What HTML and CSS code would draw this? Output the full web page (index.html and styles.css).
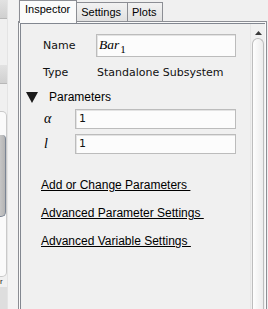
FILE: index.html
```html
<!DOCTYPE html>
<html>
<head>
<meta charset="utf-8">
<link rel="stylesheet" href="styles.css">
</head>
<body>
<div class="app">
  <div class="side">
    <div class="side-col">
      <div class="side-btn"></div>
      <div class="side-btn second"></div>
      <div class="side-track"><div class="side-thumb"></div></div>
      <div class="side-r">r</div>
      <div class="side-foot"></div>
    </div>
  </div>
  <div class="main">
    <div class="tabs">
      <div class="tab active">Inspector</div>
      <div class="tab">Settings</div>
      <div class="tab">Plots</div>
    </div>
    <div class="pane">
      <div class="scroll">
        <div class="content">
          <div class="field-row name-row">
            <span class="lbl">Name</span>
            <div class="input name-input"><span class="math">Bar</span><span class="sub">1</span></div>
          </div>
          <div class="field-row type-row">
            <span class="lbl">Type</span>
            <span class="val">Standalone Subsystem</span>
          </div>
          <div class="section">
            <svg class="tri" width="12" height="11" viewBox="0 0 12 11"><polygon points="0,0 12,0 6,11" fill="#1a1a1a"/></svg>
            <span class="sec-title">Parameters</span>
          </div>
          <div class="param-row first">
            <span class="sym">α</span>
            <div class="input pinput">1</div>
          </div>
          <div class="param-row">
            <span class="sym">l</span>
            <div class="input pinput">1</div>
          </div>
          <div class="links">
            <a class="link">Add or Change Parameters&nbsp;</a>
            <a class="link">Advanced Parameter Settings&nbsp;</a>
            <a class="link">Advanced Variable Settings&nbsp;</a>
          </div>
        </div>
        <div class="vscroll">
          <svg class="arrow" width="7" height="4" viewBox="0 0 7 4"><polygon points="0,4 7,4 3.5,0" fill="#3a3a3a"/></svg>
          <div class="vthumb"></div>
        </div>
      </div>
    </div>
  </div>
</div>
</body>
</html>
```

FILE: styles.css
```css
* { box-sizing: border-box; }
html, body {
  margin: 0;
  padding: 0;
  width: 268px;
  height: 309px;
  overflow: hidden;
  background: #f0f0f0;
  font-family: "DejaVu Sans", sans-serif;
  font-size: 11px;
  color: #111;
}
.app {
  display: flex;
  height: 309px;
}
.side {
  width: 18px;
  flex: none;
  background: #f3f3f3;
}
.side-col {
  width: 8px;
  height: 309px;
  display: flex;
  flex-direction: column;
  background: #f0f0f0;
  border-right: 1px solid #e4e4e4;
  overflow: hidden;
}
.side-btn {
  height: 19px;
  flex: none;
  background: linear-gradient(#e2e2e2, #d0d0d0);
  border-bottom: 1px solid #b8b8b8;
}
.side-btn.second {
  margin-top: 46px;
}
.side-track {
  margin-top: 27px;
  height: 166px;
  flex: none;
  width: 7px;
  background: #fafafa;
  border: 1px solid #c9c9c9;
  border-left: none;
  border-radius: 0 5px 5px 0;
  padding-top: 23px;
}
.side-thumb {
  height: 82px;
  width: 6px;
  background: linear-gradient(to right, #c6c6c6, #b4b4b4);
  border-right: 1px solid #7b8594;
  border-bottom: 1px solid #7b8594;
  border-radius: 0 4px 5px 0;
}
.side-r {
  height: 9px;
  flex: none;
  font-family: "Liberation Sans", sans-serif;
  font-size: 8px;
  line-height: 9px;
  color: #222;
}
.side-foot {
  margin-top: 1px;
  flex: 1;
  background: #dedede;
}
.main {
  flex: 1;
  margin-right: 1px;
  display: flex;
  flex-direction: column;
  min-width: 0;
}
.tabs {
  display: flex;
  align-items: flex-end;
  height: 21px;
  padding-left: 1px;
  flex: none;
}
.tab {
  height: 19px;
  padding: 3px 6px 0 4px;
  margin-right: -1px;
  border: 1px solid #8c8e94;
  border-bottom: none;
  background: linear-gradient(#f2f2f2, #e1e1e1);
  font-family: "Liberation Sans", sans-serif;
  font-size: 11px;
  line-height: 13px;
  color: #000;
  white-space: nowrap;
}
.tab.active {
  position: relative;
  z-index: 1;
  height: 23px;
  margin-bottom: -2px;
  padding: 2px 6px 0 5px;
  background: #fbfbfb;
}
.pane {
  flex: 1;
  border: 1px solid #8c8e94;
  border-bottom: none;
  padding: 1px 1px 0 1px;
  background: #fafafa;
  display: flex;
  min-height: 0;
}
.scroll {
  flex: 1;
  display: flex;
  border-top: 1px solid #828790;
  border-left: 1px solid #828790;
  background: #f0f0f0;
  min-width: 0;
}
.content {
  flex: 1;
  min-width: 0;
  padding: 10px 0 0 22px;
}
.field-row {
  display: flex;
  align-items: center;
}
.lbl {
  width: 53px;
  flex: none;
}
.name-row {
  height: 23px;
}
.input {
  background: #fcfcfc;
  border: 1px solid #bcbcbc;
  box-shadow: inset 1px 1px 0 #e3e3e3;
}
.name-input {
  width: 140px;
  height: 23px;
  padding: 2px 0 0 2px;
  display: flex;
  align-items: baseline;
  white-space: nowrap;
}
.math {
  font-family: "Liberation Serif", serif;
  font-style: italic;
  font-size: 13.5px;
  line-height: 16px;
  color: #000;
}
.sub {
  font-family: "Liberation Serif", serif;
  font-size: 11px;
  position: relative;
  top: 4px;
  margin-left: 1px;
  color: #000;
}
.type-row {
  height: 18px;
  margin-top: 6px;
}
.val {
  padding-left: 1px;
}
.section {
  display: flex;
  align-items: center;
  height: 18px;
  margin: 7px 0 0 -17px;
}
.tri {
  flex: none;
  margin-right: 11px;
}
.sec-title {
  font-family: "Liberation Sans", sans-serif;
  font-size: 12px;
  color: #000;
}
.param-row {
  display: flex;
  align-items: center;
  height: 20px;
  margin-top: 5px;
}
.param-row.first {
  margin-top: 3px;
}
.sym {
  width: 32px;
  flex: none;
  padding-left: 1px;
  font-family: "Liberation Serif", serif;
  font-style: italic;
  font-size: 14px;
  color: #000;
}
.pinput {
  width: 161px;
  height: 20px;
  padding: 2px 0 0 3px;
  line-height: 14px;
}
.links {
  display: flex;
  flex-direction: column;
  align-items: flex-start;
  gap: 14px;
  margin: 24px 0 0 -2px;
}
.link {
  font-family: "Liberation Sans", sans-serif;
  font-size: 12px;
  line-height: 14px;
  color: #000;
  text-decoration: underline;
  white-space: nowrap;
}
.vscroll {
  width: 15px;
  flex: none;
  display: flex;
  flex-direction: column;
  align-items: center;
  padding-top: 7px;
  background: #f0f0f0;
  border-left: 1px solid #e6e6e6;
}
.arrow {
  flex: none;
}
.vthumb {
  margin-top: 3px;
  width: 12px;
  flex: 1;
  border: 1px solid #bdbdbd;
  border-bottom: none;
  border-radius: 6px 6px 0 0;
  background: linear-gradient(to right, #fefefe, #ececec);
}
```
